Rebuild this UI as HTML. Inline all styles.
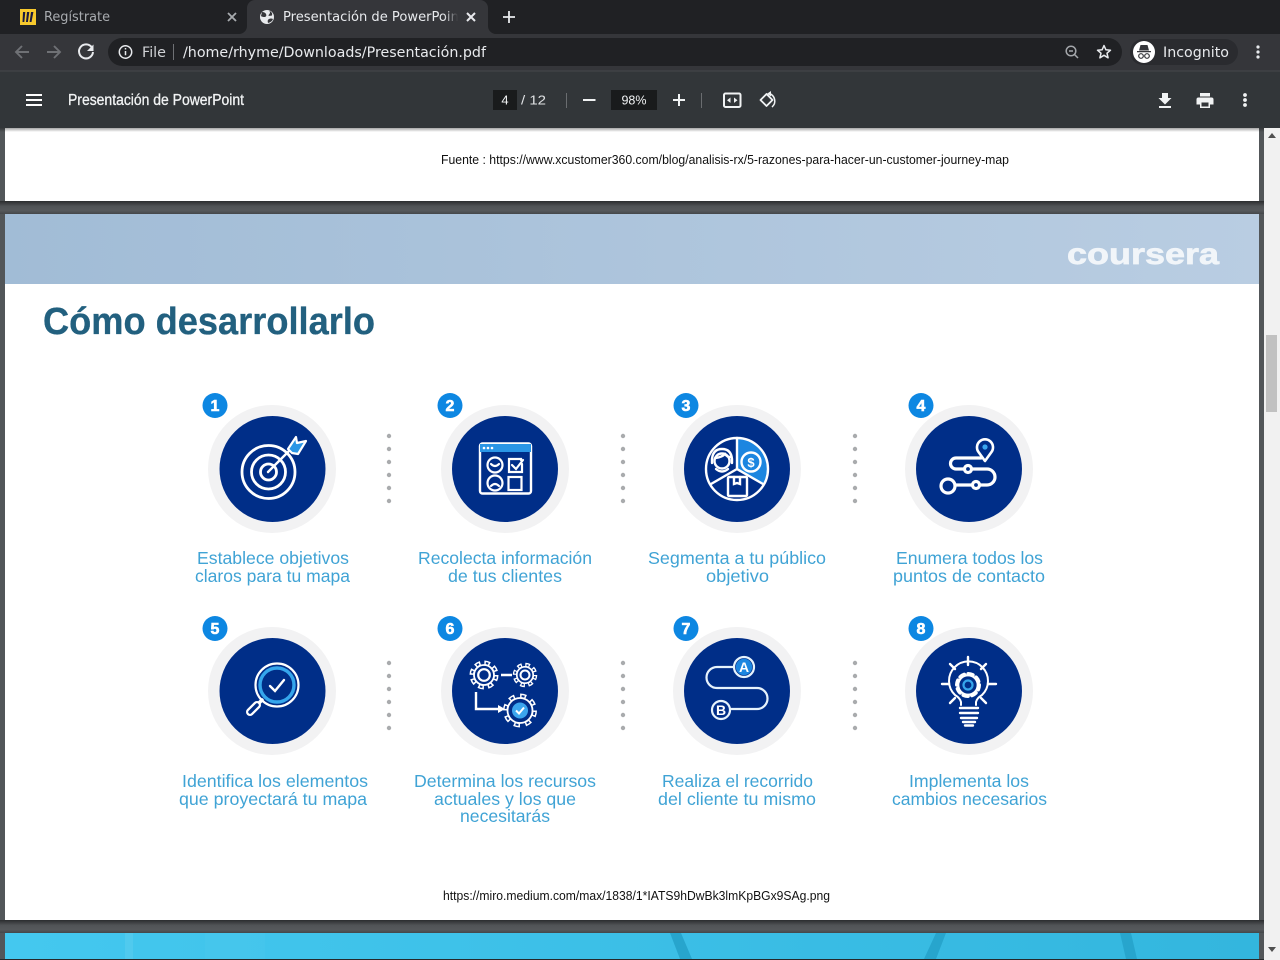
<!DOCTYPE html>
<html lang="es"><head><meta charset="utf-8"><title>Presentación de PowerPoint</title>
<style>
html,body{margin:0;padding:0;width:1280px;height:960px;overflow:hidden;background:#525659}
svg{display:block}
text{font-family:"Liberation Sans",sans-serif}
.d{font-family:"DejaVu Sans",sans-serif}
.cap{font-size:17.5px;fill:#3fa3d5;filter:url(#soft)}
</style></head><body>
<svg xmlns="http://www.w3.org/2000/svg" width="1280" height="960" viewBox="0 0 1280 960">
<defs>
<linearGradient id="band" x1="0" x2="1"><stop offset="0" stop-color="#a1bcd6"/><stop offset="1" stop-color="#b9cde2"/></linearGradient>
<linearGradient id="gap" x1="0" x2="0" y1="0" y2="1"><stop offset="0" stop-color="#2b2d2f"/><stop offset=".4" stop-color="#505356"/><stop offset=".75" stop-color="#55585b"/><stop offset="1" stop-color="#44474a"/></linearGradient>
<linearGradient id="top" x1="0" x2="0" y1="0" y2="1"><stop offset="0" stop-color="#000" stop-opacity=".35"/><stop offset="1" stop-color="#000" stop-opacity="0"/></linearGradient>
<linearGradient id="cy" x1="0" x2="1"><stop offset="0" stop-color="#44c8ef"/><stop offset="1" stop-color="#33b6de"/></linearGradient>
<linearGradient id="fade" x1="0" x2="1"><stop offset="0" stop-color="#35363a" stop-opacity="0"/><stop offset="1" stop-color="#35363a"/></linearGradient>
<filter id="soft" x="-5%" y="-5%" width="110%" height="110%"><feGaussianBlur stdDeviation=".35"/></filter>
<clipPath id="p3"><rect x="5" y="933" width="1254" height="26"/></clipPath>
</defs>

<!-- PDF viewport -->
<rect x="0" y="128" width="1264" height="832" fill="#525659"/>
<rect x="0" y="201" width="1264" height="13" fill="url(#gap)"/>
<rect x="0" y="920" width="1264" height="13" fill="url(#gap)"/>

<!-- page 1 bottom -->
<rect x="5" y="128" width="1254" height="73" fill="#fff"/>
<text x="441" y="164" font-size="13" fill="#111" textLength="568" lengthAdjust="spacingAndGlyphs">Fuente : https://www.xcustomer360.com/blog/analisis-rx/5-razones-para-hacer-un-customer-journey-map</text>

<!-- page 2 -->
<rect x="5" y="214" width="1254" height="706" fill="#fff"/>
<rect x="5" y="214" width="1254" height="70" fill="url(#band)"/>
<text x="1067" y="264" font-size="30" font-weight="700" fill="#f1f5f9" stroke="#f1f5f9" stroke-width=".7" textLength="152" lengthAdjust="spacingAndGlyphs" filter="url(#soft)">coursera</text>
<text x="43" y="334" font-size="38" font-weight="700" fill="#22607f" stroke="#22607f" stroke-width=".3" textLength="332" lengthAdjust="spacingAndGlyphs">Cómo desarrollarlo</text>

<g filter="url(#soft)">
<!-- discs -->
<g fill="#f2f2f3">
<circle cx="272" cy="469" r="64"/><circle cx="505" cy="469" r="64"/><circle cx="737" cy="469" r="64"/><circle cx="969" cy="469" r="64"/>
<circle cx="272" cy="691" r="64"/><circle cx="505" cy="691" r="64"/><circle cx="737" cy="691" r="64"/><circle cx="969" cy="691" r="64"/>
</g>
<g fill="#052e88">
<circle cx="272.500" cy="469" r="53"/><circle cx="505" cy="469" r="53"/><circle cx="737" cy="469" r="53"/><circle cx="969" cy="469" r="53"/>
<circle cx="272.500" cy="691" r="53"/><circle cx="505" cy="691" r="53"/><circle cx="737" cy="691" r="53"/><circle cx="969" cy="691" r="53"/>
</g>
<!-- dots -->
<g fill="#a9abad">
<circle cx="389" cy="436" r="2.200"/><circle cx="389" cy="449" r="2.200"/><circle cx="389" cy="462" r="2.200"/><circle cx="389" cy="475" r="2.200"/><circle cx="389" cy="488" r="2.200"/><circle cx="389" cy="501" r="2.200"/>
<circle cx="623" cy="436" r="2.200"/><circle cx="623" cy="449" r="2.200"/><circle cx="623" cy="462" r="2.200"/><circle cx="623" cy="475" r="2.200"/><circle cx="623" cy="488" r="2.200"/><circle cx="623" cy="501" r="2.200"/>
<circle cx="855" cy="436" r="2.200"/><circle cx="855" cy="449" r="2.200"/><circle cx="855" cy="462" r="2.200"/><circle cx="855" cy="475" r="2.200"/><circle cx="855" cy="488" r="2.200"/><circle cx="855" cy="501" r="2.200"/>
<circle cx="389" cy="663" r="2.200"/><circle cx="389" cy="676" r="2.200"/><circle cx="389" cy="689" r="2.200"/><circle cx="389" cy="702" r="2.200"/><circle cx="389" cy="715" r="2.200"/><circle cx="389" cy="728" r="2.200"/>
<circle cx="623" cy="663" r="2.200"/><circle cx="623" cy="676" r="2.200"/><circle cx="623" cy="689" r="2.200"/><circle cx="623" cy="702" r="2.200"/><circle cx="623" cy="715" r="2.200"/><circle cx="623" cy="728" r="2.200"/>
<circle cx="855" cy="663" r="2.200"/><circle cx="855" cy="676" r="2.200"/><circle cx="855" cy="689" r="2.200"/><circle cx="855" cy="702" r="2.200"/><circle cx="855" cy="715" r="2.200"/><circle cx="855" cy="728" r="2.200"/>
</g>
<!-- badges -->
<g fill="#1087e2">
<circle cx="215" cy="405.500" r="12.500"/><circle cx="450" cy="405.500" r="12.500"/><circle cx="686" cy="405.500" r="12.500"/><circle cx="921" cy="405.500" r="12.500"/>
<circle cx="215" cy="628.500" r="12.500"/><circle cx="450" cy="628.500" r="12.500"/><circle cx="686" cy="628.500" r="12.500"/><circle cx="921" cy="628.500" r="12.500"/>
</g>
<g fill="#fff" stroke="#fff" stroke-width=".6" font-size="16" font-weight="700" text-anchor="middle">
<text x="215" y="411">1</text><text x="450" y="411">2</text><text x="686" y="411">3</text><text x="921" y="411">4</text>
<text x="215" y="634">5</text><text x="450" y="634">6</text><text x="686" y="634">7</text><text x="921" y="634">8</text>
</g>

<!-- icon 1 target -->
<g fill="none" stroke="#fff" stroke-width="2.800" stroke-linecap="round">
<circle cx="268.500" cy="472" r="26.500"/><circle cx="268.500" cy="472" r="17"/><circle cx="268.500" cy="472" r="8"/>
<path d="M268 472l22-22" stroke-width="2.400"/>
</g>
<path d="M288 449l8-12 1 6 9-2-8 13-6-1z" fill="#2a96e6" stroke="#fff" stroke-width="2.200" stroke-linejoin="round"/>

<!-- icon 2 window -->
<rect x="480" y="443.500" width="51" height="50" rx="2.500" fill="none" stroke="#fff" stroke-width="2.400"/>
<rect x="480" y="444" width="51" height="8" fill="#2a96e6"/>
<g fill="#fff"><circle cx="484" cy="448" r="1.300"/><circle cx="488" cy="448" r="1.300"/><circle cx="492" cy="448" r="1.300"/></g>
<g fill="none" stroke="#fff" stroke-width="2.200" stroke-linecap="round">
<circle cx="495" cy="465" r="7.500"/><circle cx="495" cy="483" r="7.500"/>
<path d="M491 464q4 4 8 0M491 486q4-4 8 0"/>
<path d="M521 460v-1h-12v13h13v-8"/><path d="M512 465l4 4 7-9"/>
<rect x="508.500" y="477" width="13" height="13"/>
</g>

<!-- icon 3 pie -->
<path d="M737 469V438a31 31 0 0 1 26.500 46z" fill="#1b86e0"/>
<g fill="none" stroke="#fff" stroke-width="2.400" stroke-linecap="round">
<circle cx="737" cy="469" r="31"/><path d="M737 438v31l26 15M737 469l-26 15"/>
<circle cx="751" cy="462" r="9.500"/>
<circle cx="722" cy="461" r="7.500"/><path d="M712 463v-4q1-10 10-10t10 10v4M716 458q6-1 9-4 2 3 5 3M716 469q6 5 12 0"/>
<rect x="728" y="477" width="19" height="19" rx="1"/><path d="M734 477v7l3-1 3 1v-7"/>
</g>
<text x="751" y="467" font-size="13" font-weight="700" fill="#fff" text-anchor="middle">$</text>

<!-- icon 4 route -->
<g fill="none" stroke="#fff" stroke-width="3.200" stroke-linecap="round">
<path d="M981 458H956a5.500 5.500 0 0 0 0 11h31a8 8 0 0 1 0 16H955"/>
<circle cx="948" cy="486" r="7" fill="#052e88"/><circle cx="968" cy="469" r="3.500" fill="#052e88"/><circle cx="976" cy="485" r="3.500" fill="#052e88"/>
</g>
<path d="M985 461l-6.500-9a8 8 0 1 1 13 0z" fill="#052e88" stroke="#fff" stroke-width="2.600" stroke-linejoin="round"/>
<circle cx="985" cy="447" r="2.600" fill="#3aa6ee"/>

<!-- icon 5 magnifier -->
<g fill="none" stroke-linecap="round">
<circle cx="277" cy="685" r="21.500" stroke="#fff" stroke-width="2.200"/>
<circle cx="277" cy="685" r="17" stroke="#35a6ec" stroke-width="3.400"/>
<path d="M270 686l5 5 9-11" stroke="#fff" stroke-width="2.400"/>
<path d="M262 700l-4 4" stroke="#fff" stroke-width="3.500"/>
<path d="M257 705l-7 7" stroke="#fff" stroke-width="8"/>
<path d="M257 705l-7 7" stroke="#052e88" stroke-width="3.500"/>
</g>

<!-- icon 6 gears -->
<g fill="none" stroke="#fff">
<circle cx="484" cy="675" r="12" stroke-width="5" stroke-dasharray="5.500 3.925"/>
<circle cx="484" cy="675" r="12" stroke="#052e88" stroke-width="2" stroke-dasharray="2.500 6.925" stroke-dashoffset="-1.500"/>
<circle cx="484" cy="675" r="10" stroke-width="1.800" fill="#052e88"/>
<circle cx="484" cy="675" r="5.800" stroke-width="2.200"/>
<circle cx="525" cy="675" r="10" stroke-width="4.500" stroke-dasharray="4.500 3.354"/>
<circle cx="525" cy="675" r="10" stroke="#052e88" stroke-width="1.800" stroke-dasharray="2 5.854" stroke-dashoffset="-1.250"/>
<circle cx="525" cy="675" r="8.200" stroke-width="1.700" fill="#052e88"/>
<circle cx="525" cy="675" r="4.500" stroke-width="2"/>
<circle cx="520" cy="710.500" r="14.500" stroke-width="5" stroke-dasharray="6 5.388"/>
<circle cx="520" cy="710.500" r="14.500" stroke="#052e88" stroke-width="2" stroke-dasharray="3 8.388" stroke-dashoffset="-1.500"/>
<circle cx="520" cy="710.500" r="12.500" stroke-width="1.800" fill="#052e88"/>
<path d="M501 675h11M476 692v17h23" stroke-width="2.400"/>
</g>
<circle cx="520" cy="710.500" r="8" fill="#3aa6ee"/>
<path d="M516 710.500l3 3 5-6" fill="none" stroke="#fff" stroke-width="2"/>
<path d="M498 705l7 4-7 4z" fill="#fff"/>

<!-- icon 7 A-B -->
<g fill="none" stroke="#e6f3fc" stroke-width="2.200">
<path d="M734 667h-17a10.500 10.500 0 0 0 0 21h40a10.500 10.500 0 0 1 0 21h-27"/>
<circle cx="721" cy="710" r="9"/>
<circle cx="744" cy="667" r="10"/>
</g>
<circle cx="744" cy="667" r="8.200" fill="#1b86e0"/>
<text x="744" y="672" font-size="14" font-weight="700" fill="#fff" text-anchor="middle">A</text>
<text x="721" y="715" font-size="14" font-weight="700" fill="#fff" text-anchor="middle">B</text>

<!-- icon 8 bulb -->
<g fill="none" stroke="#fff" stroke-linecap="round">
<path d="M961 705v-3q-1-4-6-7a19.500 19.500 0 1 1 27 0q-5 3-6 7v3" stroke-width="2"/>
<path d="M960 708h18M960 713h18M961 718h16M963 722h12M965 725.500h8" stroke-width="2.400"/>
<path d="M968 657v8M950 664l5 5M986 664l-5 5M942 684h7M988 684h8M950 703l5-5M986 703l-5-5" stroke-width="2.400"/>
<circle cx="968" cy="685" r="11" stroke="#fff" stroke-width="4" stroke-dasharray="4.500 4.140"/>
<circle cx="968" cy="685" r="9.500" fill="#052e88" stroke="#fff" stroke-width="1.700"/>
<circle cx="968" cy="685" r="4.500" stroke="#35a6ec" stroke-width="2.200"/>
</g>
</g>

<!-- captions -->
<text class="cap" x="197" y="564" textLength="152" lengthAdjust="spacingAndGlyphs">Establece objetivos</text>
<text class="cap" x="195" y="582" textLength="155" lengthAdjust="spacingAndGlyphs">claros para tu mapa</text>
<text class="cap" x="418" y="564" textLength="174" lengthAdjust="spacingAndGlyphs">Recolecta información</text>
<text class="cap" x="448" y="582" textLength="114" lengthAdjust="spacingAndGlyphs">de tus clientes</text>
<text class="cap" x="648" y="564" textLength="178" lengthAdjust="spacingAndGlyphs">Segmenta a tu público</text>
<text class="cap" x="706" y="582" textLength="63" lengthAdjust="spacingAndGlyphs">objetivo</text>
<text class="cap" x="896" y="564" textLength="147" lengthAdjust="spacingAndGlyphs">Enumera todos los</text>
<text class="cap" x="893" y="582" textLength="152" lengthAdjust="spacingAndGlyphs">puntos de contacto</text>
<text class="cap" x="182" y="787" textLength="186" lengthAdjust="spacingAndGlyphs">Identifica los elementos</text>
<text class="cap" x="179" y="805" textLength="188" lengthAdjust="spacingAndGlyphs">que proyectará tu mapa</text>
<text class="cap" x="414" y="787" textLength="182" lengthAdjust="spacingAndGlyphs">Determina los recursos</text>
<text class="cap" x="434" y="805" textLength="142" lengthAdjust="spacingAndGlyphs">actuales y los que</text>
<text class="cap" x="460" y="822" textLength="90" lengthAdjust="spacingAndGlyphs">necesitarás</text>
<text class="cap" x="662" y="787" textLength="151" lengthAdjust="spacingAndGlyphs">Realiza el recorrido</text>
<text class="cap" x="658" y="805" textLength="158" lengthAdjust="spacingAndGlyphs">del cliente tu mismo</text>
<text class="cap" x="909" y="787" textLength="120" lengthAdjust="spacingAndGlyphs">Implementa los</text>
<text class="cap" x="892" y="805" textLength="155" lengthAdjust="spacingAndGlyphs">cambios necesarios</text>

<text x="443" y="900" font-size="13" fill="#111" textLength="387" lengthAdjust="spacingAndGlyphs">https://miro.medium.com/max/1838/1*IATS9hDwBk3lmKpBGx9SAg.png</text>

<!-- page 3 -->
<rect x="5" y="933" width="1254" height="26" fill="url(#cy)"/>
<g clip-path="url(#p3)">
<path d="M125 933h8v26h-8z" fill="#6fd5f2" opacity=".3"/>
<path d="M205 933h60v26h-60z" fill="#5bcdee" opacity=".18"/>
<path d="M670 933h11l11 26h-12zM936 933h10l-10 26h-12zM1120 933h11l6 26h-11z" fill="#27a5cd"/>
</g>
<rect x="0" y="959" width="1264" height="1" fill="#26282a"/>

<!-- scrollbar -->
<rect x="1264" y="128" width="16" height="832" fill="#f1f1f1"/>
<rect x="1266" y="335" width="11" height="77" fill="#c1c1c1"/>
<path d="M1268 138l4-5 4 5z" fill="#505050"/>
<path d="M1268 947l4 5 4-5z" fill="#505050"/>

<!-- toolbar shadow on page -->
<rect x="0" y="128" width="1264" height="4" fill="url(#top)"/>

<!-- tab strip -->
<rect x="0" y="0" width="1280" height="34" fill="#202124"/>
<path d="M239 34a8 8 0 0 0 8-8V8a8 8 0 0 1 8-8h225a8 8 0 0 1 8 8v18a8 8 0 0 0 8 8z" fill="#35363a"/>
<rect x="20" y="9" width="16" height="16" fill="#f7c92d"/>
<path d="M23 12h2.300l-1 10h-1.800zM27 12h2.300l-1.400 10H26zM31 12h2.400l-1.900 10h-1.900z" fill="#1a1a40"/>
<text class="d" x="44" y="21" font-size="13" fill="#a8abaf" textLength="66" lengthAdjust="spacingAndGlyphs">Regístrate</text>
<path d="M228 13l8 8M236 13l-8 8" stroke="#a8abaf" stroke-width="1.800" fill="none"/>
<circle cx="267" cy="17" r="7" fill="#e8eaed"/>
<path d="M262 12q3 0 4 2t-1 3q-3 0-4-1zM268 23q-1-3 1-4t4 0q-1 3-5 4zM269 10.500q2 2 0 4t3 1q1-3-3-5z" fill="#35363a"/>
<text class="d" x="283" y="21" font-size="13" fill="#e8eaed" textLength="181" lengthAdjust="spacingAndGlyphs">Presentación de PowerPoint</text>
<rect x="444" y="8" width="14" height="18" fill="url(#fade)"/>
<rect x="458" y="8" width="24" height="18" fill="#35363a"/>
<path d="M467 13l8 8M475 13l-8 8" stroke="#e8eaed" stroke-width="2" fill="none"/>
<path d="M509 11v12M503 17h12" stroke="#e8eaed" stroke-width="1.800" fill="none"/>

<!-- address row -->
<rect x="0" y="34" width="1280" height="37" fill="#35363a"/>
<rect x="0" y="70.500" width="1280" height="1" fill="#45484c"/>
<g fill="none" stroke="#6f7175" stroke-width="1.900">
<path d="M29 52H16M22 46l-6 6 6 6"/>
<path d="M47 52h13M54 46l6 6-6 6"/>
</g>
<path d="M91.700 47.300A7 7 0 1 0 93 52" fill="none" stroke="#e8eaed" stroke-width="2"/>
<path d="M93.500 44.500v6.500h-6.500z" fill="#e8eaed"/>
<rect x="108" y="38" width="1014" height="28" rx="14" fill="#202124"/>
<circle cx="125.500" cy="52" r="6.200" fill="none" stroke="#e8eaed" stroke-width="1.500"/>
<path d="M125.500 51v4.200M125.500 48v1.500" stroke="#e8eaed" stroke-width="1.500"/>
<text class="d" x="142" y="57" font-size="14" fill="#d0d2d5" textLength="24" lengthAdjust="spacingAndGlyphs">File</text>
<rect x="173" y="44" width="1" height="16" fill="#6f7175"/>
<text class="d" x="183" y="57" font-size="14" fill="#e8eaed" textLength="303" lengthAdjust="spacingAndGlyphs">/home/rhyme/Downloads/Presentación.pdf</text>
<g fill="none" stroke="#a4a7ab" stroke-width="1.500"><circle cx="1071" cy="51" r="4.800"/><path d="M1074.500 54.500l3.500 3.500M1069 51h4"/></g>
<path d="M1104 45.500l1.900 4.300 4.600.4-3.500 3 1.100 4.600-4.100-2.500-4.100 2.500 1.100-4.600-3.500-3 4.600-.4z" fill="none" stroke="#e8eaed" stroke-width="1.500" stroke-linejoin="round"/>
<rect x="1130" y="39" width="108" height="26" rx="13" fill="#2a2b2f"/>
<circle cx="1144" cy="52" r="11" fill="#fff"/>
<path d="M1139 50.500l1.500-5.500h7l1.500 5.500zM1137 51h14v1.200h-14z" fill="#35363a"/>
<g fill="none" stroke="#35363a" stroke-width="1.200"><circle cx="1141" cy="56" r="2.300"/><circle cx="1147" cy="56" r="2.300"/></g>
<text class="d" x="1163" y="57" font-size="14" fill="#e8eaed" textLength="66" lengthAdjust="spacingAndGlyphs">Incognito</text>
<g fill="#e8eaed"><circle cx="1258" cy="47" r="1.600"/><circle cx="1258" cy="52" r="1.600"/><circle cx="1258" cy="57" r="1.600"/></g>

<!-- PDF toolbar -->
<rect x="0" y="71.500" width="1280" height="56.500" fill="#323639"/>
<path d="M26 95h16M26 100h16M26 105h16" stroke="#fff" stroke-width="2" fill="none"/>
<text x="68" y="105" font-size="15.500" fill="#f1f3f4" stroke="#f1f3f4" stroke-width=".3" textLength="176" lengthAdjust="spacingAndGlyphs">Presentación de PowerPoint</text>
<rect x="493" y="90" width="24" height="20" fill="#191b1c"/>
<text x="505" y="104.500" font-size="13" fill="#f1f3f4" text-anchor="middle">4</text>
<text x="521" y="104.500" font-size="13" fill="#e0e2e4" textLength="25" lengthAdjust="spacingAndGlyphs">/ 12</text>
<rect x="566" y="93" width="1" height="15" fill="#6a6d70"/>
<path d="M583 100h12.500" stroke="#f1f3f4" stroke-width="2"/>
<rect x="611" y="90" width="46" height="20" fill="#191b1c"/>
<text x="634" y="104.500" font-size="12.500" fill="#f1f3f4" text-anchor="middle">98%</text>
<path d="M673 100h12M679 94v12" stroke="#f1f3f4" stroke-width="2" fill="none"/>
<rect x="701" y="93" width="1" height="15" fill="#6a6d70"/>
<rect x="724" y="93.500" width="16.500" height="13.500" rx="1.500" fill="none" stroke="#f1f3f4" stroke-width="2"/>
<path d="M730.500 97.500l-3.500 2.700 3.500 2.700zM734 97.500l3.500 2.700-3.500 2.700z" fill="#f1f3f4"/>
<path d="M760.500 100l6-6 6 6-6 6z" fill="none" stroke="#f1f3f4" stroke-width="1.800" stroke-linejoin="round"/>
<path d="M769 93.500a7.800 7.800 0 0 1 3 13.500" fill="none" stroke="#f1f3f4" stroke-width="1.500"/>
<path d="M771 91l-4 2.700 4 2.700z" fill="#f1f3f4"/>
<path d="M1162 93h6v5h3.500l-6.500 6.500-6.500-6.500h3.500zM1159 106h12v2h-12z" fill="#f1f3f4"/>
<path d="M1200 93h10v3.500h-10zM1198.500 97.500h13a2 2 0 0 1 2 2v5h-3.500v3.500h-10v-3.500h-3.500v-5a2 2 0 0 1 2-2z" fill="#f1f3f4"/>
<rect x="1201.500" y="102.500" width="7" height="4" fill="#323639"/>
<g fill="#f1f3f4"><circle cx="1245" cy="95" r="1.900"/><circle cx="1245" cy="100" r="1.900"/><circle cx="1245" cy="105" r="1.900"/></g>
</svg>
</body></html>
